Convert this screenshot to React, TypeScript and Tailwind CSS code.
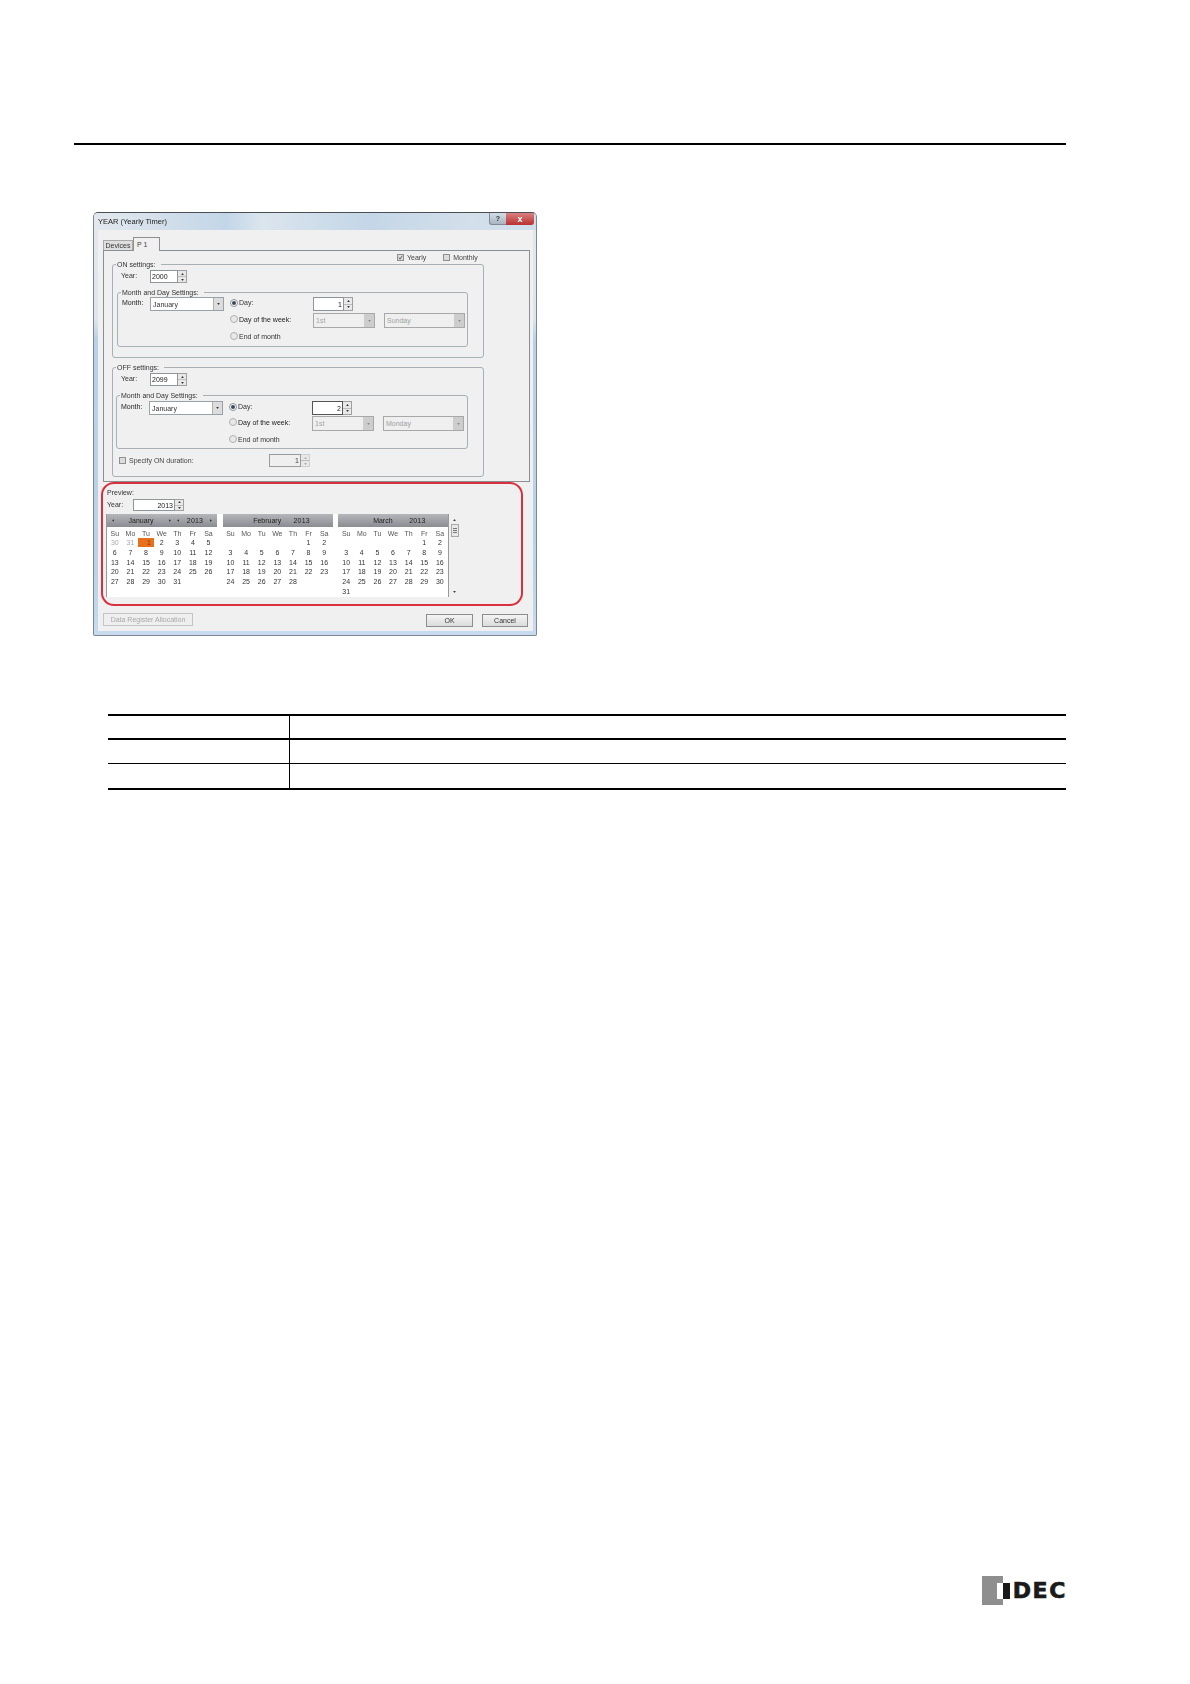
import * as React from "react"

const FONT = "font-['Liberation_Sans',Arial,sans-serif]"

// Small arrow used in spinners, combos and the calendar header
function Tri({ dir = "down", className = "fill-[#333]" }: { dir?: "up" | "down" | "left" | "right"; className?: string }) {
  const points = {
    up: "0,3 2,0 4,3",
    down: "0,0 4,0 2,3",
    left: "3,0 3,4 0,2",
    right: "0,0 0,4 3,2",
  }[dir]
  const box = dir === "up" || dir === "down" ? "0 0 4 3" : "0 0 3 4"
  const size = dir === "up" || dir === "down" ? "w-[3px] h-[2px]" : "w-[2px] h-[3px]"
  return (
    <svg viewBox={box} className={`${size} ${className}`}>
      <polygon points={points} />
    </svg>
  )
}

function SpinButtons({ disabled }: { disabled?: boolean }) {
  return (
    <div className={`flex h-full w-[9px] flex-col border border-l-0 ${disabled ? "border-[#cfcfcf] bg-[#e8e8e8]" : "border-[#a0a0a0] bg-[#e8e8e8]"}`}>
      <div className="flex flex-1 items-center justify-center border-b border-[#bdbdbd]">
        <Tri dir="up" className={disabled ? "fill-[#aaa]" : "fill-[#333]"} />
      </div>
      <div className="flex flex-1 items-center justify-center">
        <Tri dir="down" className={disabled ? "fill-[#aaa]" : "fill-[#333]"} />
      </div>
    </div>
  )
}

function Spinner({ value, width, disabled, strong }: { value: string; width: number; disabled?: boolean; strong?: boolean }) {
  const border = disabled ? "border-[#9b9b9b] bg-[#efefef] text-[#444]" : strong ? "border-[#555] bg-white text-[#222]" : "border-[#8f959b] bg-white text-[#222]"
  return (
    <div className="flex h-full">
      <div
        className={`flex h-full items-center justify-end border px-[1px] ${border}`}
        style={{ width }}
      >
        {value}
      </div>
      <SpinButtons disabled={disabled} />
    </div>
  )
}

function YearInput({ value }: { value: string }) {
  return (
    <div className="flex h-full">
      <div className="flex h-full w-[28px] items-center border border-[#8f959b] bg-white pl-[1px] text-[#222]">{value}</div>
      <SpinButtons />
    </div>
  )
}

function Combo({ value, width, disabled }: { value: string; width: number; disabled?: boolean }) {
  return (
    <div
      className={`flex h-full items-center justify-between border pl-[2px] ${disabled ? "border-[#a8a8a8] bg-[#efefef] text-[#a0a0a0]" : "border-[#9aa0a6] bg-white text-[#333]"}`}
      style={{ width }}
    >
      <span>{value}</span>
      <div className={`flex h-full w-[10px] items-center justify-center ${disabled ? "bg-[#cdcdcd]" : "bg-[#dcdcdc] border-l border-[#b0b0b0]"}`}>
        <Tri className={disabled ? "fill-[#8a8a8a]" : "fill-[#333]"} />
      </div>
    </div>
  )
}

function Radio({ checked }: { checked?: boolean }) {
  return (
    <span className={`flex h-[8px] w-[8px] shrink-0 items-center justify-center rounded-full border ${checked ? "border-[#8a8f95] bg-white" : "border-[#b0b0b0] bg-[#e8e8e8]"}`}>
      {checked ? <span className="h-[4px] w-[4px] rounded-full bg-[#3a4a5c]" /> : null}
    </span>
  )
}

function Check({ checked }: { checked?: boolean }) {
  return (
    <span className="flex h-[7px] w-[7px] shrink-0 items-center justify-center border border-[#8f8f8f] bg-[#dcdcdc]">
      {checked ? (
        <svg viewBox="0 0 6 6" className="h-[5px] w-[5px] fill-none stroke-[#4a4a4a]">
          <path d="M1 3l1.5 2L5 1" />
        </svg>
      ) : null}
    </span>
  )
}

function GroupLabel({ children }: { children: React.ReactNode }) {
  return <div className="-mt-[5px] ml-[3px] h-[9px] w-fit bg-[#f0f0f0] px-[1px] pr-[5px] leading-[9px] text-[#333]">{children}</div>
}

// Month and Day Settings block, shared by ON and OFF settings
function MonthDay({
  day,
  weekday,
  className,
  firstTop,
  rowGap,
  strong,
}: {
  day: string
  weekday: string
  className: string
  firstTop: string
  rowGap: string
  strong?: boolean
}) {
  return (
    <div className={`rounded-[3px] border border-[#a9afb3] ${className}`}>
      <GroupLabel>Month and Day Settings:</GroupLabel>
      <div className={`flex ${firstTop}`}>
        <div className="flex h-[11px] w-[32px] items-center pl-[4px] text-[#222]">Month:</div>
        <div className="h-[14px]">
          <Combo value="January" width={74} />
        </div>
        <div className="ml-[6px] flex flex-col">
          <div className="flex h-[14px] items-center">
            <div className="mb-[3px] flex w-[83px] items-center gap-[1px] text-[#333]">
              <Radio checked />
              <span>Day:</span>
            </div>
            <Spinner value={day} width={31} strong={strong} />
          </div>
          <div className={`flex h-[15px] items-center ${rowGap}`}>
            <div className="mb-[3px] flex w-[83px] items-center gap-[1px] text-[#222]">
              <Radio />
              <span>Day of the week:</span>
            </div>
            <Combo value="1st" width={62} disabled />
            <div className="ml-[9px] h-full">
              <Combo value={weekday} width={81} disabled />
            </div>
          </div>
          <div className="mt-[1px] flex h-[14px] items-center gap-[1px] text-[#333]">
            <Radio />
            <span>End of month</span>
          </div>
        </div>
      </div>
    </div>
  )
}

const HEADER = ["Su", "Mo", "Tu", "We", "Th", "Fr", "Sa"]

function Month({ name, blanks, days, prev, nav }: { name: string; blanks: number; days: number; prev?: number[]; nav?: boolean }) {
  const cells: { label: string; muted?: boolean; today?: boolean }[] = []
  for (let i = 0; i < blanks; i++) cells.push({ label: "" })
  ;(prev ?? []).forEach((d) => cells.push({ label: String(d), muted: true }))
  for (let d = 1; d <= days; d++) cells.push({ label: String(d), today: nav && d === 1 })
  return (
    <div className="w-[110px] shrink-0">
      <div className="flex h-[13px] items-center bg-[linear-gradient(180deg,#b4b6ba,#8a8c91)] text-[#222]">
        {nav ? (
          <>
            <div className="flex w-[11px] justify-center"><Tri dir="left" /></div>
            <div className="w-[46px] text-center">January</div>
            <div className="flex w-[11px] justify-center"><Tri dir="right" /></div>
            <div className="flex w-[6px] justify-center"><Tri dir="left" /></div>
            <div className="w-[28px] text-center tracking-[0.2px]">2013</div>
            <div className="flex w-[4px] justify-center"><Tri dir="right" /></div>
          </>
        ) : (
          <>
            <div className="w-[62px] pl-[27px] text-center">{name}</div>
            <div className="w-[34px] text-center tracking-[0.2px]">2013</div>
          </>
        )}
      </div>
      <div className="mt-[1px] grid h-[10px] w-[109.3px] grid-cols-7 items-center text-center text-[#555]">
        {HEADER.map((h) => (
          <div key={h}>{h}</div>
        ))}
      </div>
      <div className="grid w-[109.3px] grid-cols-7 auto-rows-[9.7px] items-center text-center text-[#333]">
        {cells.map((c, i) => (
          <div
            key={i}
            className={c.today ? "flex h-[9px] items-center justify-end bg-[#e8701d] pr-[3px] text-[#7a3a10]" : c.muted ? "text-[#a8a8a8]" : ""}
          >
            {c.label}
          </div>
        ))}
      </div>
    </div>
  )
}

function Button({ children, className, disabled }: { children: React.ReactNode; className: string; disabled?: boolean }) {
  return (
    <div
      className={`flex h-[13px] items-center justify-center border ${disabled ? "border-[#c4c4c4] bg-[#efefef] text-[#a8a8a8]" : "border-[#8d8d8d] bg-[linear-gradient(180deg,#f4f4f4,#dcdcdc)] text-[#333]"} ${className}`}
    >
      {children}
    </div>
  )
}

function YearDialog() {
  return (
    <div className="ml-[19px] mt-[67px] flex h-[424px] w-[444px] flex-col rounded-t-[5px] rounded-b-[2px] border border-[#7d8790] border-t-[#4a4f55] bg-[linear-gradient(180deg,#e4e8ec_0%,#dfe5ec_25%,#b9d0e8_30%,#bcd2e8_85%,#c8dbee_100%)] text-[7px] leading-none blur-[0.3px]">
      <div className="flex h-[17px] shrink-0 items-start justify-between rounded-t-[4px] bg-[linear-gradient(90deg,#e3e8ee_0%,#c3d6e8_30%,#dbe5ee_38%,#c4d6e7_62%,#d3dfea_85%,#cfdeec_100%)] pl-[4px] pr-[2px]">
        <span className="mt-[5px] text-[7.5px] text-[#222]">YEAR (Yearly Timer)</span>
        <div className="flex">
          <div className="flex h-[12px] w-[17px] items-center justify-center rounded-bl-[3px] border-b border-l border-[#7f8a96] bg-[linear-gradient(180deg,#d4dde6,#a9b5c1)] font-bold text-[#333]">?</div>
          <div className="flex h-[12px] w-[28px] items-center justify-center rounded-br-[3px] bg-[linear-gradient(180deg,#dc8080,#b8302f)] text-[9px] font-bold text-white">x</div>
        </div>
      </div>
      <div className="ml-[4px] mr-[3px] flex h-[401px] flex-col bg-[#f0f0f0] pl-[5px]">
        <div className="mt-[7px] flex h-[13px] shrink-0 items-end">
          <div className="flex h-[10px] w-[30px] items-center justify-center border border-b-0 border-[#a8a8a8] bg-[#dedede] text-[#333]">Devices</div>
          <div className="relative -mb-[1px] h-[14px] w-[27px] border border-b-0 border-[#8f8f8f] bg-[#f0f0f0] pl-[3px] pt-[3px] text-[#444]">P 1</div>
        </div>
        <div className="h-[232px] w-[427px] shrink-0 border border-[#8c8f92] pl-[8px]">
          <div className="flex h-[13px] items-center pl-[285px] text-[#444]">
            <Check checked />
            <span className="ml-[3px]">Yearly</span>
            <span className="ml-[17px]"><Check /></span>
            <span className="ml-[3px]">Monthly</span>
          </div>
          <div className="h-[94px] w-[372px] rounded-[3px] border border-[#a9afb3]">
            <GroupLabel>ON settings:</GroupLabel>
            <div className="mt-[1px] flex h-[13px] items-center pl-[8px]">
              <span className="mb-[2px] w-[29px] text-[#333]">Year:</span>
              <YearInput value="2000" />
            </div>
            <MonthDay day="1" weekday="Sunday" className="ml-[4px] mt-[9px] h-[55px] w-[351px]" firstTop="mt-0" rowGap="mt-[2px]" />
          </div>
          <div className="mt-[9px] h-[110px] w-[372px] rounded-[3px] border border-[#a9afb3]">
            <GroupLabel>OFF settings:</GroupLabel>
            <div className="mt-[1px] flex h-[13px] items-center pl-[8px]">
              <span className="mb-[2px] w-[29px] text-[#333]">Year:</span>
              <YearInput value="2099" />
            </div>
            <MonthDay day="2" weekday="Monday" className="ml-[3px] mt-[9px] h-[54px] w-[352px]" firstTop="mt-[1px]" rowGap="mt-[1px]" strong />
            <div className="mt-[5px] flex h-[13px] items-center pl-[6px] text-[#444]">
              <Check />
              <span className="ml-[3px] w-[140px]">Specify ON duration:</span>
              <Spinner value="1" width={32} disabled />
            </div>
          </div>
        </div>

        <div className="ml-[-2px] h-[124px] w-[422px] shrink-0 rounded-[13px] border-2 border-[#d8303f]">
          <div className="ml-[4px] mt-[4px] h-[9px] leading-[9px] text-[#333]">Preview:</div>
          <div className="ml-[4px] mt-[2px] flex h-[12px] items-center">
            <span className="mb-[2px] w-[26px] text-[#333]">Year:</span>
            <Spinner value="2013" width={42} />
          </div>
          <div className="ml-[3px] mt-[3px] flex">
            <div className="flex h-[83px] w-[343px] gap-[5.7px] overflow-hidden border-x border-[#9a9a9a] bg-white">
              <Month name="January" blanks={0} prev={[30, 31]} days={31} nav />
              <Month name="February" blanks={5} days={28} />
              <Month name="March" blanks={5} days={31} />
            </div>
            <div className="flex h-[83px] w-[11px] flex-col items-center pt-[5px]">
              <Tri dir="up" />
              <div className="mt-[3px] flex h-[13px] w-[8px] flex-col items-center justify-center gap-[1px] border border-[#a8a8a8] bg-[#e8e8e8]">
                <span className="h-px w-[4px] bg-[#777]" />
                <span className="h-px w-[4px] bg-[#777]" />
                <span className="h-px w-[4px] bg-[#777]" />
              </div>
              <div className="mt-auto mb-[4px]"><Tri /></div>
            </div>
          </div>
        </div>

        <div className="mt-[7px] flex items-start pr-[5px]">
          <Button className="w-[90px]" disabled>Data Register Allocation</Button>
          <Button className="ml-auto mt-[1px] w-[47px]">OK</Button>
          <Button className="ml-[9px] mt-[1px] w-[46px]">Cancel</Button>
        </div>
      </div>
    </div>
  )
}

function EmptyTable() {
  const rows = [
    { h: "h-[24px]", b: "border-b-2" },
    { h: "h-[24px]", b: "border-b" },
    { h: "h-[26px]", b: "border-b-2" },
  ]
  return (
    <div className="ml-[34px] mt-[78px] w-[958px] border-t-2 border-black">
      {rows.map((r, i) => (
        <div key={i} className={`flex border-black ${r.h} ${r.b}`}>
          <div className="w-[182px] border-r border-black" />
          <div className="flex-1" />
        </div>
      ))}
    </div>
  )
}

function Logo() {
  return (
    <div className="mr-[123px] mt-auto flex h-[29px] items-center self-end bg-white">
      <div className="flex h-[29px] w-[21px] items-center justify-end bg-[#8e8e8e]">
        <span className="h-[16px] w-[6px] bg-white" />
      </div>
      <span className="h-[16px] w-[7px] bg-[#1a1a1a]" />
      <span className="ml-[3px] font-['DejaVu_Sans',sans-serif] text-[22px] font-bold leading-none tracking-[1.6px] text-[#1a1a1a] [-webkit-text-stroke:0.7px_#1a1a1a]">DEC</span>
    </div>
  )
}

export default function App() {
  return (
    <div className={`flex h-[1684px] w-[1190px] flex-col bg-white pb-[79px] pl-[74px] pt-[143px] ${FONT}`}>
      <div className="h-[2px] w-[992px] shrink-0 bg-black" />
      <YearDialog />
      <EmptyTable />
      <Logo />
    </div>
  )
}
